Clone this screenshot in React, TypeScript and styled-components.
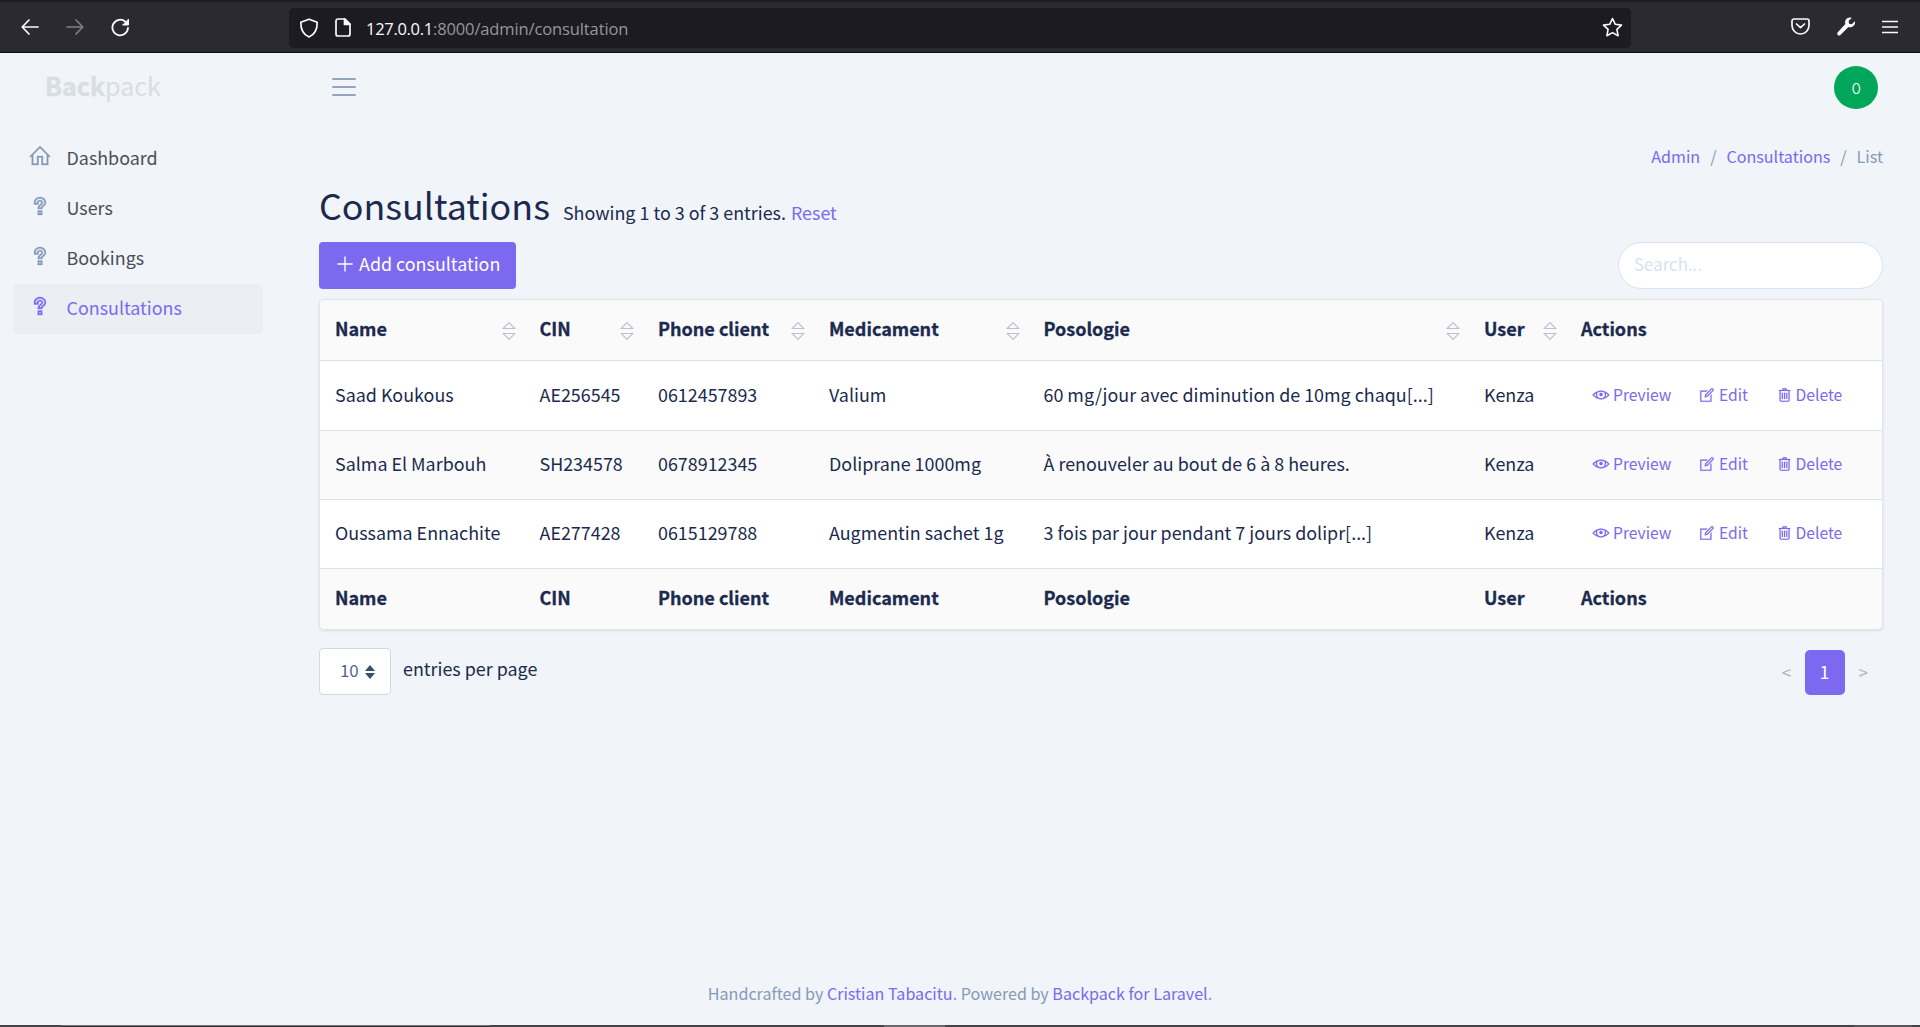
import React from "react";
import styled, { createGlobalStyle, css } from "styled-components";
import { LiaHomeSolid, LiaQuestionSolid, LiaEye, LiaEdit, LiaTrashAlt, LiaPlusSolid } from "react-icons/lia";

const purple = "#7c69ef";
const ink = "#1b2a4e";
const muted = "#869ab8";
const line = "#d9e2ef";

const Global = createGlobalStyle`
  *, *::before, *::after { box-sizing: border-box; }
  html, body { margin: 0; height: 100%; }
  body {
    background: #f1f4f8;
    color: ${ink};
    font-family: "Noto Sans CJK SC", "Noto Sans", sans-serif;
    font-size: 17.9px;
    line-height: 30px;
    overflow: hidden;
  }
  a { color: ${purple}; text-decoration: none; }
`;

const Page = styled.div`
  display: flex;
  flex-direction: column;
  height: 1027px;
`;

/* browser chrome */
const Chrome = styled.div`
  display: flex;
  align-items: center;
  flex: none;
  height: 53px;
  padding: 0 20px 0 21px;
  background: #2b2a33;
  border-top: 2px solid #1c1b22;
  border-bottom: 1px solid #0c0c0d;
  color: #fbfbfe;
  svg { display: block; flex: none; }
`;
const NavButtons = styled.div`
  display: flex;
  gap: 27px;
  width: 268px;
`;
const Dim = styled.span`
  opacity: 0.4;
`;
const UrlBar = styled.div`
  display: flex;
  align-items: center;
  gap: 16px;
  width: 1342px;
  height: 40px;
  margin-top: 1px;
  padding: 0 8px 0 10px;
  border-radius: 5px;
  background: #1c1b22;
`;
const UrlText = styled.div`
  flex: 1;
  margin-left: -1px;
  padding-top: 3px;
  font-family: "Open Sans", "Noto Sans", sans-serif;
  font-size: 16.5px;
  letter-spacing: -0.12px;
  color: #97969d;
  b { font-weight: 400; letter-spacing: -0.3px; color: #fbfbfe; }
`;
const ChromeTools = styled.div`
  display: flex;
  align-items: center;
  gap: 26.5px;
  margin: 0 0 1px 160px;
`;

/* header */
const Header = styled.header`
  display: flex;
  align-items: center;
  flex: none;
  height: 69px;
  padding: 0 42px 0 45px;
`;
const Logo = styled.div`
  width: 287px;
  padding-bottom: 5px;
  color: #d9dee2;
  font-size: 25px;
  b { font-weight: 700; -webkit-text-stroke: 0.4px; }
`;
const Burger = styled.div`
  display: flex;
  flex-direction: column;
  gap: 6px;
  width: 24px;
  margin-bottom: 1px;
  span { height: 2px; border-radius: 1px; background: #93a5c3; }
`;
const Avatar = styled.div`
  display: flex;
  align-items: center;
  justify-content: center;
  width: 44px;
  height: 43px;
  margin: 0 0 0 auto;
  border-radius: 50%;
  background: #00a65a;
  color: #fff;
  font-size: 14.5px;
  font-weight: 350;
  span { transform: scaleX(0.84); }
`;

const Body = styled.div`
  display: flex;
  flex: 1;
`;
const Sidebar = styled.nav`
  display: flex;
  flex-direction: column;
  width: 319px;
  padding: 12px 0 0 13px;
`;
const NavItem = styled.a<{ $active?: boolean }>`
  display: flex;
  align-items: center;
  width: 250px;
  height: 50px;
  padding: 0 0 4px 15px;
  border-radius: 5px;
  color: #4a4f57;
  svg { width: 24px; height: 24px; margin: 0 14.5px 2px 0; color: ${muted}; stroke: currentColor; stroke-width: 0.4px; }
  ${(p) => p.$active && css`
    background: #ebeef3;
    color: ${purple};
    svg { color: ${purple}; }
  `}
`;

const Main = styled.main`
  display: flex;
  flex-direction: column;
  width: 1564px;
`;
const Breadcrumb = styled.div`
  display: flex;
  justify-content: flex-end;
  gap: 10px;
  height: 30px;
  margin-top: 19px;
  font-size: 16.1px;
  color: ${muted};
`;
const Title = styled.div`
  display: flex;
  align-items: baseline;
  height: 60px;
  margin-top: 3px;
  h1 { margin: 0 13px 0 0; font-weight: 400; font-size: 35.8px; line-height: 60px; }
  a { margin-left: 5px; }
`;
const Toolbar = styled.div`
  display: flex;
  justify-content: space-between;
  margin-top: 8px;
`;
const AddButton = styled.button`
  display: flex;
  align-items: center;
  width: 197px;
  height: 47px;
  padding: 0 0 5px 15px;
  border: 0;
  border-radius: 4px;
  background: ${purple};
  color: #fff;
  font: inherit;
  svg { width: 22px; height: 22px; margin: 2px 3px 0 0; }
`;
const Search = styled.input`
  width: 265px;
  height: 47px;
  padding: 0 15px 4px;
  border: 1px solid ${line};
  border-radius: 24px;
  background: #fff;
  font: inherit;
  font-size: 16.9px;
  &::placeholder { color: ${line}; opacity: 1; }
`;

const Table = styled.div`
  margin-top: 10px;
  border: 1px solid #dfe3ea;
  border-radius: 5px;
  background: #fff;
  box-shadow: 0 1px 3px rgba(27, 42, 78, 0.1);
  overflow: hidden;
`;
const Row = styled.div<{ $h: number; $shade?: boolean; $bold?: boolean }>`
  display: grid;
  grid-template-columns: 204.5px 118.5px 171px 214.5px 440.5px 97px 1fr;
  align-items: center;
  height: ${(p) => p.$h}px;
  background: ${(p) => (p.$shade ? "#fafafa" : "#fff")};
  ${(p) => p.$bold && css`
    font-size: 18px;
    font-weight: 700;
    -webkit-text-stroke: 0.3px;
  `}
  & + & { border-top: 1px solid #dde2ec; }
`;
const Cell = styled.div`
  display: flex;
  align-items: center;
  justify-content: space-between;
  padding: 0 9px 4px 15px;
  white-space: nowrap;
  svg { margin-top: 5px; }
`;
const Actions = styled.div`
  display: flex;
  padding: 0 0 2px 26px;
  font-size: 15.7px;
  a { display: flex; align-items: center; }
  svg { width: 18px; height: 18px; margin-right: 3px; stroke: currentColor; stroke-width: 0.3px; }
  a + a { margin-left: 27px; }
  a + a svg { margin-right: 2.5px; }
`;

const Bottom = styled.div`
  display: flex;
  align-items: center;
  margin-top: 18px;
  height: 47px;
`;
const Select = styled.div`
  display: flex;
  align-items: center;
  gap: 6px;
  width: 72px;
  height: 47px;
  margin-right: 12px;
  padding: 0 0 3px 20px;
  border: 1px solid #d0d9e8;
  border-radius: 4px;
  background: #fff;
  color: #506690;
  font-size: 16.9px;
  svg { margin-top: 3px; }
`;
const PerPage = styled.span`
  padding-bottom: 8px;
`;
const Pager = styled.div`
  display: flex;
  align-items: center;
  margin: 2px 15px 0 auto;
  color: #a9b6cb;
  font-size: 17px;
  span { padding-bottom: 2px; }
  b {
    width: 40px;
    height: 45px;
    margin: 0 14px 0 13.5px;
    border-radius: 5px;
    background: ${purple};
    color: #fff;
    font-size: 17.9px;
    font-weight: 400;
    line-height: 43px;
    text-align: center;
  }
`;
const Footer = styled.footer`
  flex: none;
  height: 47px;
  color: ${muted};
  font-size: 16.1px;
  text-align: center;
`;
const Taskbar = styled.div`
  display: grid;
  grid-template-columns: 429px 394px 61px 909px 58px;
  flex: none;
  height: 2px;
  padding-left: 61px;
  background: #444448;
`;
const TaskSegment = styled.span<{ $top?: string; $bottom?: string }>`
  border-top: 1px solid ${(p) => p.$top || "transparent"};
  background: ${(p) => p.$bottom || "transparent"};
`;

const SortIcon = () => (
  <svg width="14" height="20" viewBox="0 0 14 20" fill="none" stroke="#bcc1cf" strokeWidth="1.2">
    <path d="M1.2 7.500L7 1.500l5.800 6zM1.2 12.500h11.600L7 18.500z" />
  </svg>
);

const columns = ["Name", "CIN", "Phone client", "Medicament", "Posologie", "User"];
const rows = [
  ["Saad Koukous", "AE256545", "0612457893", "Valium", "60 mg/jour avec diminution de 10mg chaqu[...]", "Kenza"],
  ["Salma El Marbouh", "SH234578", "0678912345", "Doliprane 1000mg", "À renouveler au bout de 6 à 8 heures.", "Kenza"],
  ["Oussama Ennachite", "AE277428", "0615129788", "Augmentin sachet 1g", "3 fois par jour pendant 7 jours dolipr[...]", "Kenza"],
];

export default function App() {
  return (
    <Page>
      <Global />
      <Chrome>
        <NavButtons>
          <svg width="18" height="18" viewBox="0 0 18 18" fill="none" stroke="currentColor" strokeWidth="1.7" strokeLinecap="round" strokeLinejoin="round"><path d="M17 9H1.5M8 2L1.2 9 8 16" /></svg>
          <Dim><svg width="18" height="18" viewBox="0 0 18 18" fill="none" stroke="currentColor" strokeWidth="1.7" strokeLinecap="round" strokeLinejoin="round"><path d="M1 9h15.5M10 2l6.800 7L10 16" /></svg></Dim>
          <svg width="19" height="19" viewBox="0 0 19 19" fill="none" stroke="currentColor" strokeWidth="1.8" strokeLinecap="round"><path d="M14.500 3.800A7.800 7.800 0 1 0 17 9.800" /><path d="M17.500 1.500v5.500H12z" fill="currentColor" strokeWidth="1" strokeLinejoin="round" /></svg>
        </NavButtons>
        <UrlBar>
          <svg width="20" height="20" viewBox="0 0 20 20" fill="none" stroke="currentColor" strokeWidth="1.7" strokeLinejoin="round"><path d="M10 1.200L1.800 4.300C1.700 11 4 16.500 10 19c6-2.500 8.300-8 8.200-14.700z" /></svg>
          <svg width="16" height="19" viewBox="0 0 16 19" fill="none" stroke="currentColor" strokeWidth="1.7" strokeLinejoin="round"><path d="M3 1h7l5 5v10a2 2 0 0 1-2 2H3a2 2 0 0 1-2-2V3a2 2 0 0 1 2-2z" /><path d="M9.500 1v5.500H15z" fill="currentColor" /></svg>
          <UrlText><b>127.0.0.1</b>:8000/admin/consultation</UrlText>
          <svg width="21" height="21" viewBox="0 0 21 21" fill="none" stroke="currentColor" strokeWidth="1.6" strokeLinejoin="round"><path d="M10.500 1.500l2.800 5.800 6.200.8-4.600 4.300 1.200 6.300-5.600-3.100-5.600 3.100 1.200-6.300L1.500 8.100l6.200-.8z" /></svg>
        </UrlBar>
        <ChromeTools>
          <svg width="19" height="17" viewBox="0 0 19 17" fill="none" stroke="currentColor" strokeWidth="1.7" strokeLinecap="round" strokeLinejoin="round"><path d="M3 1h13a2 2 0 0 1 2 2v4.500a8.500 8.500 0 0 1-17 0V3a2 2 0 0 1 2-2z" /><path d="M5.500 6l4 3.700 4-3.700" /></svg>
          <svg width="19" height="19" viewBox="0 0 19 19" fill="currentColor"><path d="M17.900 4.200l-3.200 3-2.600-.4-.5-2.700L14.700.9C12.500.2 10 .8 8.800 2.800c-.9 1.400-.9 3-.4 4.300L.8 15.300c-.8.900-.7 1.900 0 2.600.8.800 1.900.700 2.600 0l8-7.800c1.600.5 3.600.2 5-1.100 1.500-1.400 1.900-3.200 1.500-4.800z" /></svg>
          <svg width="16" height="14" viewBox="0 0 16 14" stroke="currentColor" strokeWidth="1.5"><path d="M0 1.500h16M0 7h16M0 12.500h16" /></svg>
        </ChromeTools>
      </Chrome>

      <Header>
        <Logo><b>Back</b>pack</Logo>
        <Burger><span /><span /><span /></Burger>
        <Avatar><span>O</span></Avatar>
      </Header>

      <Body>
        <Sidebar>
          <NavItem><LiaHomeSolid />Dashboard</NavItem>
          <NavItem><LiaQuestionSolid />Users</NavItem>
          <NavItem><LiaQuestionSolid />Bookings</NavItem>
          <NavItem $active><LiaQuestionSolid />Consultations</NavItem>
        </Sidebar>
        <Main>
          <Breadcrumb>
            <a>Admin</a><span>/</span><a>Consultations</a><span>/</span><span>List</span>
          </Breadcrumb>
          <Title>
            <h1>Consultations</h1>
            <span>Showing 1 to 3 of 3 entries.</span>
            <a>Reset</a>
          </Title>
          <Toolbar>
            <AddButton><LiaPlusSolid />Add consultation</AddButton>
            <Search placeholder="Search..." />
          </Toolbar>
          <Table>
            <Row $h={60} $shade $bold>
              {columns.map((c) => <Cell key={c}>{c}<SortIcon /></Cell>)}
              <Cell>Actions</Cell>
            </Row>
            {rows.map((r, i) => (
              <Row key={r[0]} $h={i === 0 ? 70 : 69} $shade={i % 2 === 1}>
                {r.map((v, j) => <Cell key={j}>{v}</Cell>)}
                <Actions>
                  <a><LiaEye />Preview</a>
                  <a><LiaEdit />Edit</a>
                  <a><LiaTrashAlt />Delete</a>
                </Actions>
              </Row>
            ))}
            <Row $h={61} $shade $bold>
              {columns.map((c) => <Cell key={c}>{c}</Cell>)}
              <Cell>Actions</Cell>
            </Row>
          </Table>
          <Bottom>
            <Select>10
              <svg width="10" height="14" viewBox="0 0 10 14" fill="#384c74"><path d="M0 6L5 0l5 6zM0 8h10l-5 6z" /></svg>
            </Select>
            <PerPage>entries per page</PerPage>
            <Pager><span>&lt;</span><b>1</b><span>&gt;</span></Pager>
          </Bottom>
        </Main>
      </Body>
      <Footer>
        Handcrafted by <a>Cristian Tabacitu</a>. Powered by <a>Backpack for Laravel</a>.
      </Footer>
      <Taskbar>
        <TaskSegment $top="#77777b" $bottom="#2e2e32" />
        <TaskSegment />
        <TaskSegment $top="#6a6a6e" $bottom="#6a6a6e" />
        <TaskSegment />
        <TaskSegment $top="#55555a" $bottom="#55555a" />
      </Taskbar>
    </Page>
  );
}
